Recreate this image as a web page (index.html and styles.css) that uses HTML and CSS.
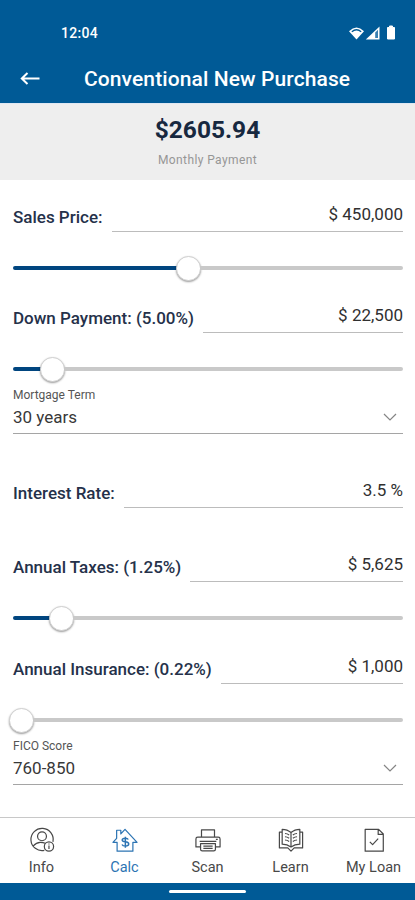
FILE: index.html
```html
<!DOCTYPE html>
<html lang="en">
<head>
<meta charset="utf-8">
<title>Conventional New Purchase</title>
<link rel="stylesheet" href="styles.css">
</head>
<body>
<div class="app">
  <header class="header">
    <div class="status">
      <span class="clock">12:04</span>
      <svg class="status-icons" width="50" height="18" viewBox="0 0 50 18">
        <path d="M1 6.200Q8.500-1.200 16 6.200L8.500 14.500Z" fill="#fff"/>
        <path d="M3.800 6.700Q8.500 2.800 13.200 6.700" fill="none" stroke="#005a96" stroke-width="1.300"/>
        <path d="M17.800 14.500L31.500 1.500V14.500Z" fill="#fff"/>
        <path d="M27.200 7.500L30 4.800V13H27.200Z" fill="#3980b2"/>
        <path d="M39.500 2.500h2V1h3v1.500h2V14h-7Z" fill="#fff" stroke="#fff" stroke-width="1" stroke-linejoin="round"/>
      </svg>
    </div>
    <div class="titlebar">
      <svg class="back" width="22" height="16" viewBox="0 0 22 16"><path d="M20.500 7.500H3M8.500 2L2.800 7.500L8.500 13" fill="none" stroke="#fff" stroke-width="2"/></svg>
      <h1 class="title">Conventional New Purchase</h1>
    </div>
  </header>
  <section class="summary">
    <div class="amount">$2605.94</div>
    <div class="caption">Monthly Payment</div>
  </section>
  <main class="form">
    <div class="field first"><span class="label">Sales Price:</span><span class="value">$ 450,000</span></div>
    <div class="slider"><i class="fill" style="width:164px"></i><i class="thumb"></i><i class="track"></i></div>
    <div class="field"><span class="label">Down Payment: (5.00%)</span><span class="value">$ 22,500</span></div>
    <div class="slider"><i class="fill" style="width:28px"></i><i class="thumb"></i><i class="track"></i></div>
    <div class="select">
      <div class="select-label">Mortgage Term</div>
      <div class="select-value"><span>30 years</span><svg width="14" height="8" viewBox="0 0 14 8"><path d="M1 1L7 7L13 1" fill="none" stroke="#858585" stroke-width="1.200"/></svg></div>
    </div>
    <div class="field spaced"><span class="label">Interest Rate:</span><span class="value">3.5 %</span></div>
    <div class="field spaced"><span class="label">Annual Taxes: (1.25%)</span><span class="value">$ 5,625</span></div>
    <div class="slider"><i class="fill" style="width:37px"></i><i class="thumb"></i><i class="track"></i></div>
    <div class="field insurance"><span class="label">Annual Insurance: (0.22%)</span><span class="value">$ 1,000</span></div>
    <div class="slider empty"><i class="thumb"></i><i class="track"></i></div>
    <div class="select">
      <div class="select-label">FICO Score</div>
      <div class="select-value"><span>760-850</span><svg width="14" height="8" viewBox="0 0 14 8"><path d="M1 1L7 7L13 1" fill="none" stroke="#858585" stroke-width="1.200"/></svg></div>
    </div>
  </main>
  <nav class="tabs">
    <a class="tab"><svg viewBox="0 0 28 28"><path d="M16.500 25.200A12 12 0 1 1 25.800 16M4.300 20.500Q8 16.500 12 16.500Q15.500 16.500 17.500 17.500"/><circle cx="14" cy="10" r="4.800"/><circle cx="21.500" cy="21" r="5"/><path d="M21.500 20v3.800M21.500 17.800v1"/></svg><span>Info</span></a>
    <a class="tab active"><svg viewBox="0 0 28 28"><path d="M5.500 26V16.500H1L5 12.200V3.500h4.500v4L14 2.500L27 16.500H22.500V26Z"/><path d="M17.500 13.500Q16.800 12 14.300 12Q11 12 11 14Q11 15.700 14.400 16Q18 16.300 18 18.400Q18 20.600 14.500 20.600Q11.500 20.600 10.800 18.800M14.400 10.500v11.800" stroke-width="1.600"/></svg><span>Calc</span></a>
    <a class="tab"><svg viewBox="0 0 28 28"><path d="M7 11V3H21V11M5.500 21.500H1V13Q1 11 3 11H25Q27 11 27 13V21.500H22.500M5 15.500H23M6 18H22V24Q22 25.800 20.200 25.800H7.800Q6 25.800 6 24ZM9 20.500H19M9 23H19M22.500 13.300h2"/></svg><span>Scan</span></a>
    <a class="tab"><svg viewBox="0 0 28 28"><path d="M14 6Q10 2.500 4.500 2.500V18.500Q10 18.500 14 21.500Q18 18.500 23.500 18.500V2.500Q18 2.500 14 6V21.500M4.500 5.500H1.500V22.500H10.500L14 26L17.500 22.500H26.500V5.500H23.500M7.500 7Q10 7 12 8.500M7.500 10.500Q10 10.500 12 12M7.500 14Q10 14 12 15.500M20.500 7Q18 7 16 8.500M20.500 10.500Q18 10.500 16 12M20.500 14Q18 14 16 15.500"/></svg><span>Learn</span></a>
    <a class="tab"><svg viewBox="0 0 28 28"><path d="M4.500 2.500H19L24 7.500V26H4.500ZM18.500 2.500V8H24M9.500 16L12.500 19L18.500 12.500"/></svg><span>My Loan</span></a>
  </nav>
  <footer class="home"><i></i></footer>
</div>
</body>
</html>
```

FILE: styles.css
```css
* { box-sizing: border-box; }
body { margin: 0; font-family: Roboto, "Liberation Sans", sans-serif; background: #fff; }
.app { width: 415px; height: 900px; display: flex; flex-direction: column; overflow: hidden; }
.header { height: 103px; flex: none; background: #005a96; color: #fff; }
.status { height: 56px; padding: 24px 17px 0 61px; display: flex; justify-content: space-between; align-items: flex-start; }
.clock { font-size: 14px; line-height: 19px; font-weight: 500; letter-spacing: .3px; }
.status-icons { margin-top: 1px; }
.titlebar { height: 46px; display: flex; align-items: center; padding-left: 19px; }
.back { flex: none; margin-right: 43px; }
.title { margin: 0; font-size: 21px; line-height: 24px; font-weight: 500; letter-spacing: .1px; white-space: nowrap; }
.summary { height: 77px; flex: none; background: #eee; text-align: center; padding-top: 12px; border-top: 1px solid #dfe7f2; }
.amount { font-size: 24.5px; line-height: 28px; font-weight: 700; color: #17283f; }
.caption { margin-top: 8px; font-size: 12px; line-height: 16px; color: #969696; letter-spacing: .4px; }
.form { flex: 1; padding: 0 12px 0 13px; }
.field { height: 30px; display: flex; gap: 9px; white-space: nowrap; }
.field.first { margin-top: 22px; }
.field.spaced { margin-top: 44px; }
.field.insurance { margin-top: 24px; }
.label { padding-top: 5px; font-size: 17px; line-height: 21px; font-weight: 500; color: #25314a; }
.value { flex: 1; padding-top: 1px; border-bottom: 1px solid #bcbcbc; text-align: right; font-size: 17px; line-height: 22px; color: #303030; }
.slider { height: 24px; margin: 24px 0 23px; display: flex; align-items: center; }
.slider:has(+ .select) { margin-bottom: 0; }
.slider:has(+ .insurance) { margin-bottom: 0; }
.fill { height: 4px; background: #00457f; border-radius: 2px 0 0 2px; }
.thumb { width: 25px; height: 25px; flex: none; border-radius: 50%; background: #fff; border: 1px solid #d0d0d0; box-shadow: 0 1px 2px #0006; margin: 0 -1px; }
.track { flex: 1; height: 4px; background: #c9c9c9; border-radius: 0 2px 2px 0; }
.empty .thumb { margin-left: -4px; }
.select { height: 53px; padding-top: 7px; border-bottom: 1px solid #a5a5a5; }
.select-label { font-size: 12px; line-height: 14px; color: #555; }
.select-value { margin-top: 3px; display: flex; justify-content: space-between; align-items: center; padding-right: 6px; font-size: 17px; line-height: 24px; color: #383838; }
.tabs { height: 66px; flex: none; border-top: 1px solid #c8c8c8; display: grid; grid-template-columns: repeat(5, 1fr); }
.tab { display: flex; flex-direction: column; align-items: center; padding-top: 9px; color: #484848; font-size: 14.5px; line-height: 18px; white-space: nowrap; }
.tab svg { width: 26px; height: 26px; fill: none; stroke: currentColor; stroke-width: 1.300; stroke-linejoin: round; }
.tab span { margin-top: 6px; }
.tab.active { color: #2c74b3; }
.home { height: 17px; flex: none; background: #005a96; display: flex; justify-content: center; align-items: center; }
.home i { width: 77px; height: 3px; border-radius: 2px; background: #fff; }
```
